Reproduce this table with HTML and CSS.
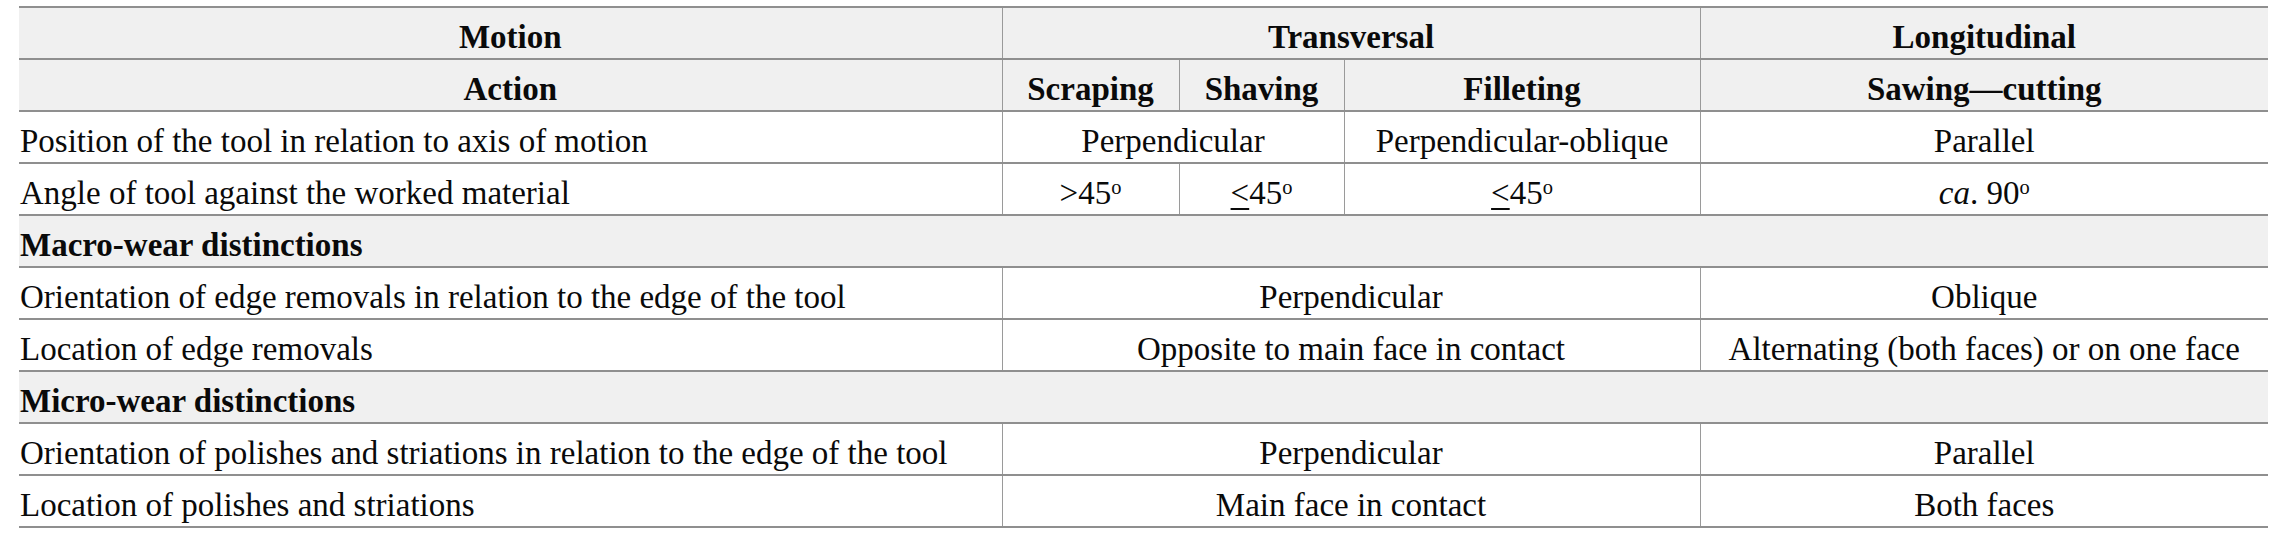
FILE: index.html
```html
<!DOCTYPE html>
<html lang="en">
<head>
<meta charset="utf-8">
<title>Motion and wear table</title>
<link rel="stylesheet" href="styles.css">
</head>
<body>
<table class="wear-table">
  <colgroup>
    <col class="c-label">
    <col class="c-scrap">
    <col class="c-shav">
    <col class="c-fill">
    <col class="c-long">
  </colgroup>
  <thead>
    <tr class="head">
      <th>Motion</th>
      <th colspan="3">Transversal</th>
      <th>Longitudinal</th>
    </tr>
    <tr class="head">
      <th>Action</th>
      <th>Scraping</th>
      <th>Shaving</th>
      <th>Filleting</th>
      <th>Sawing—cutting</th>
    </tr>
  </thead>
  <tbody>
    <tr>
      <td class="label">Position of the tool in relation to axis of motion</td>
      <td colspan="2">Perpendicular</td>
      <td>Perpendicular-oblique</td>
      <td>Parallel</td>
    </tr>
    <tr>
      <td class="label">Angle of tool against the worked material</td>
      <td>&gt;45<span class="deg">o</span></td>
      <td><span class="le">&lt;</span>45<span class="deg">o</span></td>
      <td><span class="le">&lt;</span>45<span class="deg">o</span></td>
      <td><i>ca</i>. 90<span class="deg">o</span></td>
    </tr>
    <tr class="section">
      <td colspan="5">Macro-wear distinctions</td>
    </tr>
    <tr>
      <td class="label">Orientation of edge removals in relation to the edge of the tool</td>
      <td colspan="3">Perpendicular</td>
      <td>Oblique</td>
    </tr>
    <tr>
      <td class="label">Location of edge removals</td>
      <td colspan="3">Opposite to main face in contact</td>
      <td>Alternating (both faces) or on one face</td>
    </tr>
    <tr class="section">
      <td colspan="5">Micro-wear distinctions</td>
    </tr>
    <tr>
      <td class="label">Orientation of polishes and striations in relation to the edge of the tool</td>
      <td colspan="3">Perpendicular</td>
      <td>Parallel</td>
    </tr>
    <tr>
      <td class="label">Location of polishes and striations</td>
      <td colspan="3">Main face in contact</td>
      <td>Both faces</td>
    </tr>
  </tbody>
</table>
</body>
</html>
```
FILE: styles.css
```css
html, body {
  margin: 0;
  padding: 0;
  background: #ffffff;
}

body {
  padding: 6px 28px 0 19px;
  font-family: "Liberation Serif", "Times New Roman", serif;
  font-size: 33px;
  color: #0a0a0a;
}

.wear-table {
  width: 2249px;
  table-layout: fixed;
  border-collapse: collapse;
}

.c-label { width: 983px; }
.c-scrap { width: 177px; }
.c-shav { width: 165px; }
.c-fill { width: 356px; }
.c-long { width: 568px; }

.wear-table tr {
  height: 52px;
}

.wear-table th,
.wear-table td {
  border-top: 2px solid #8f8f8f;
  border-bottom: 2px solid #8f8f8f;
  border-left: 1px solid #9a9a9a;
  border-right: 1px solid #9a9a9a;
  padding: 9px 1px 0 1px;
  text-align: center;
  vertical-align: middle;
  line-height: 1.2;
  white-space: nowrap;
}

.wear-table tr > :first-child {
  border-left: none;
}

.wear-table tr > :last-child {
  border-right: none;
}

.head th {
  background: #f0f0f0;
  font-weight: bold;
}

.wear-table td.label {
  text-align: left;
}

.section td {
  background: #f0f0f0;
  font-weight: bold;
  text-align: left;
}

.deg {
  font-size: 0.62em;
  vertical-align: 0.5em;
  line-height: 0;
}

.le {
  text-decoration: underline;
  text-underline-offset: 0.12em;
  text-decoration-thickness: 2px;
}
```
